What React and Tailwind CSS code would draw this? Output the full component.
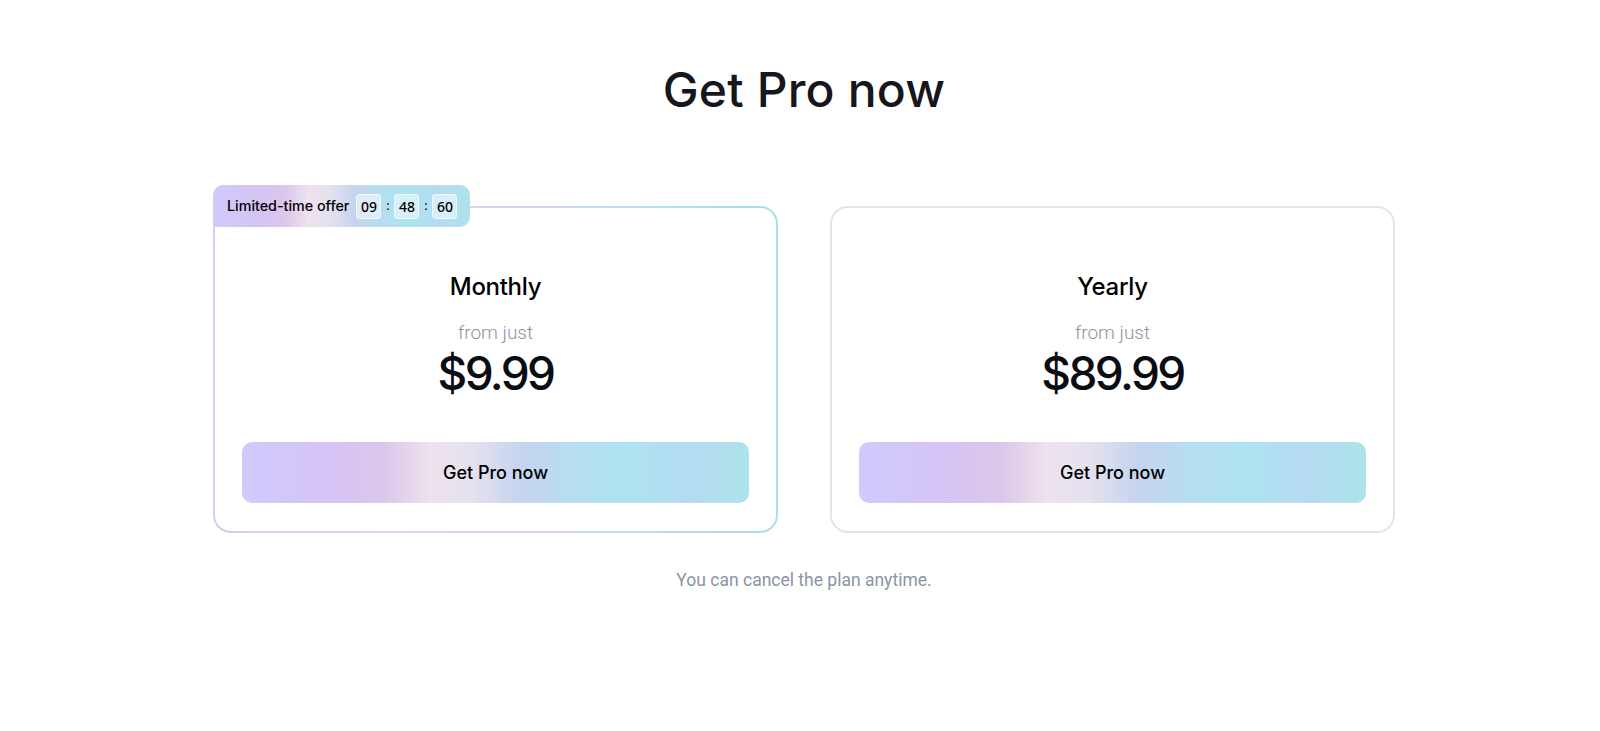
const GRADIENT =
  "bg-[linear-gradient(90deg,#d0cafd_0%,#d5c3f4_18%,#dcc6ea_28%,#ede2ee_37%,#e6e1ef_45%,#c6d4ee_55%,#b6def0_65%,#aee3f0_76%,#b5dbf3_88%,#ade3e9_100%)]";

const plans = [
  { name: "Monthly", price: "$9.99", featured: true },
  { name: "Yearly", price: "$89.99", featured: false },
];

function Timer() {
  const parts = ["09", "48", "60"];
  return (
    <div className="flex items-center gap-[3px]">
      {parts.map((p, i) => (
        <div key={i} className="flex items-center gap-[3px]">
          {i > 0 && <span className="w-[7px] text-center text-[13px] text-black">:</span>}
          <span className="w-[25px] h-[25px] flex items-center justify-center rounded-[4px] bg-white/50 border border-white/60 text-[14px] font-medium text-black">
            {p}
          </span>
        </div>
      ))}
    </div>
  );
}

function PlanCard({ plan }) {
  const body = (
    <div className="bg-white rounded-[16px] h-full flex flex-col items-center pt-[63px] pb-[28px] px-[27px]">
      <h2 className="text-[24px] leading-[32px] text-black font-medium font-['Inter',sans-serif] tracking-[-0.3px]">{plan.name}</h2>
      <p className="mt-[16px] text-[19px] leading-[28px] font-light text-[#8b94a3] font-['Roboto',sans-serif]">from just</p>
      <p className="mt-[2px] text-[46px] leading-[48px] font-medium text-[#0b0d12] font-['Inter',sans-serif] tracking-[-2.6px]">
        {plan.price}
      </p>
      <button
        className={`mt-[45px] w-full h-[64px] rounded-[10px] ${GRADIENT} text-[18px] text-black font-medium font-['Inter',sans-serif]`}
      >
        Get Pro now
      </button>
    </div>
  );

  if (!plan.featured) {
    return <div className="w-[565px] h-[327px] rounded-[18px] border-2 border-[#dce6ed] overflow-hidden">{body}</div>;
  }

  return (
    <div className="relative w-[565px] h-[327px]">
      <div className="h-full rounded-[18px] p-[2px] bg-[linear-gradient(90deg,#d4cbf6_0%,#e3d4ec_30%,#d6d4ee_55%,#b2e0ef_80%,#a9deee_100%)]">
        {body}
      </div>
      <div className={`absolute left-0 top-[-21px] w-[257px] h-[42px] rounded-t-[10px] rounded-br-[10px] ${GRADIENT} flex items-center pl-[14px]`}>
        <span className="text-[14.3px] font-medium text-black font-['Inter',sans-serif]">Limited-time offer</span>
        <div className="ml-[7px]">
          <Timer />
        </div>
      </div>
    </div>
  );
}

export default function App() {
  return (
    <div className="min-h-screen bg-white flex flex-col items-center pt-[62px] pl-[8px]">
      <h1 className="text-[48px] leading-[56px] font-medium text-[#15171c] font-['Inter',sans-serif] tracking-[0.2px]">Get Pro now</h1>
      <div className="mt-[88px] flex gap-[52px]">
        {plans.map((p) => (
          <PlanCard key={p.name} plan={p} />
        ))}
      </div>
      <p className="mt-[35px] text-[17.5px] leading-[24px] text-[#8a94a6] font-['Roboto',sans-serif]">
        You can cancel the plan anytime.
      </p>
    </div>
  );
}
